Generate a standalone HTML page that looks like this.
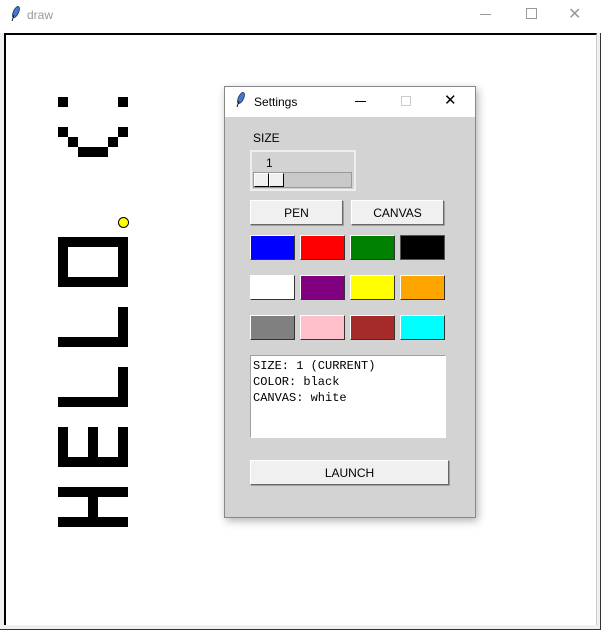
<!DOCTYPE html>
<html><head><meta charset="utf-8"><style>
*{margin:0;padding:0;box-sizing:border-box}
body{width:601px;height:630px;position:relative;background:#f0f0f0;font-family:"Liberation Sans",sans-serif;overflow:hidden}
.a{position:absolute}
.b{position:absolute;background:#000}
.btn{position:absolute;background:#f0f0f0;border:1px solid #fff;border-right-color:#696969;border-bottom-color:#696969;box-shadow:1px 1px 0 #a0a0a0;font-size:12px;color:#000;display:flex;align-items:center;justify-content:center}
.sw{position:absolute;width:45px;height:25px;border:1px solid #fff;border-right-color:#333;border-bottom-color:#333}
</style></head><body>
<div class="a" style="left:0;top:0;width:601px;height:33px;background:#fff"></div>
<svg class="a" style="left:9px;top:6px" width="12" height="16" viewBox="0 0 12 16"><ellipse cx="7" cy="6" rx="2.6" ry="6" transform="rotate(25 7 6)" fill="#4a78c8" stroke="#1a2f5c" stroke-width="0.8"/><line x1="5" y1="9" x2="3" y2="15" stroke="#111" stroke-width="1"/></svg>
<div class="a" style="left:27px;top:8px;font-size:12px;color:#999">draw</div>
<div class="a" style="left:480px;top:14px;width:11px;height:1px;background:#999"></div>
<div class="a" style="left:526px;top:8px;width:11px;height:11px;border:1px solid #999"></div>
<div class="a" style="left:568px;top:4px;font-size:16px;color:#999">&#x2715;</div>
<div class="a" style="left:0;top:33px;width:601px;height:597px;background:#f0f0f0;border-right:1px solid #333;border-bottom:1px solid #333"></div>
<div class="a" style="left:4px;top:33px;width:593px;height:592px;background:#fff;border-top:2px solid #000;border-left:2px solid #000;border-right:1px solid #ccc"></div>
<div class="b" style="left:58px;top:97px;width:10px;height:10px"></div>
<div class="b" style="left:118px;top:97px;width:10px;height:10px"></div>
<div class="b" style="left:58px;top:127px;width:10px;height:10px"></div>
<div class="b" style="left:118px;top:127px;width:10px;height:10px"></div>
<div class="b" style="left:68px;top:137px;width:10px;height:10px"></div>
<div class="b" style="left:108px;top:137px;width:10px;height:10px"></div>
<div class="b" style="left:78px;top:147px;width:30px;height:10px"></div>
<div class="a" style="left:118px;top:217px;width:11px;height:11px;border-radius:50%;background:#ff0;border:1px solid #000"></div>
<div class="a" style="left:58px;top:237px;width:70px;height:50px;border:10px solid #000"></div>
<div class="b" style="left:118px;top:307px;width:10px;height:40px"></div>
<div class="b" style="left:58px;top:337px;width:70px;height:10px"></div>
<div class="b" style="left:118px;top:367px;width:10px;height:40px"></div>
<div class="b" style="left:58px;top:397px;width:70px;height:10px"></div>
<div class="b" style="left:58px;top:457px;width:70px;height:10px"></div>
<div class="b" style="left:58px;top:427px;width:10px;height:40px"></div>
<div class="b" style="left:88px;top:427px;width:10px;height:40px"></div>
<div class="b" style="left:118px;top:427px;width:10px;height:40px"></div>
<div class="b" style="left:58px;top:487px;width:70px;height:10px"></div>
<div class="b" style="left:58px;top:517px;width:70px;height:10px"></div>
<div class="b" style="left:88px;top:487px;width:10px;height:40px"></div>
<div class="a" style="left:224px;top:86px;width:252px;height:432px;background:#d3d3d3;border:1px solid #888;box-shadow:2px 3px 8px rgba(0,0,0,.3)"></div>
<div class="a" style="left:225px;top:87px;width:250px;height:30px;background:#fff"></div>
<svg class="a" style="left:234px;top:92px" width="12" height="16" viewBox="0 0 12 16"><ellipse cx="7" cy="6" rx="2.6" ry="6" transform="rotate(25 7 6)" fill="#4a78c8" stroke="#1a2f5c" stroke-width="0.8"/><line x1="5" y1="9" x2="3" y2="15" stroke="#111" stroke-width="1"/></svg>
<div class="a" style="left:254px;top:95px;font-size:12px">Settings</div>
<div class="a" style="left:355px;top:101px;width:11px;height:1px;background:#000"></div>
<div class="a" style="left:401px;top:96px;width:10px;height:10px;border:1px solid #ccc"></div>
<div class="a" style="left:444px;top:91px;font-size:15px">&#x2715;</div>
<div class="a" style="left:253px;top:131px;font-size:12px">SIZE</div>
<div class="a" style="left:250px;top:150px;width:106px;height:41px;border:2px solid #eee"></div>
<div class="a" style="left:266px;top:156px;font-size:12px">1</div>
<div class="a" style="left:253px;top:172px;width:99px;height:16px;background:#c8c8c8;border:1px solid #999"></div>
<div class="a" style="left:254px;top:173px;width:15px;height:14px;background:#f0f0f0;border:1px solid #fff;border-right-color:#000;border-bottom-color:#000"></div>
<div class="a" style="left:269px;top:173px;width:15px;height:14px;background:#f0f0f0;border:1px solid #fff;border-right-color:#000;border-bottom-color:#000"></div>
<div class="btn" style="left:250px;top:200px;width:93px;height:25px">PEN</div>
<div class="btn" style="left:351px;top:200px;width:93px;height:25px">CANVAS</div>
<div class="sw" style="left:250px;top:235px;background:#00f"></div>
<div class="sw" style="left:300px;top:235px;background:#f00"></div>
<div class="sw" style="left:350px;top:235px;background:#008000"></div>
<div class="sw" style="left:400px;top:235px;background:#000;border-color:#555"></div>
<div class="sw" style="left:250px;top:275px;background:#fff"></div>
<div class="sw" style="left:300px;top:275px;background:#800080"></div>
<div class="sw" style="left:350px;top:275px;background:#ff0"></div>
<div class="sw" style="left:400px;top:275px;background:#ffa500"></div>
<div class="sw" style="left:250px;top:315px;background:#808080"></div>
<div class="sw" style="left:300px;top:315px;background:#ffc0cb"></div>
<div class="sw" style="left:350px;top:315px;background:#a52a2a"></div>
<div class="sw" style="left:400px;top:315px;background:#0ff"></div>
<div class="a" style="left:250px;top:355px;width:196px;height:83px;background:#fff;border:1px solid #a0a0a0;border-bottom-color:#fff;border-right-color:#fff;font-family:'Liberation Mono',monospace;font-size:12px;line-height:16px;padding:2px 0 0 2px;white-space:pre">SIZE: 1 (CURRENT)
COLOR: black
CANVAS: white</div>
<div class="btn" style="left:250px;top:460px;width:199px;height:25px">LAUNCH</div>
</body></html>
